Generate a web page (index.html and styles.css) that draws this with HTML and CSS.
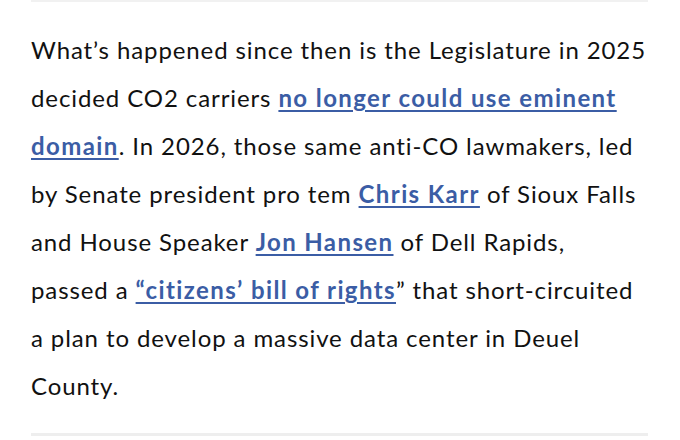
FILE: index.html
```html
<!DOCTYPE html>
<html>
<head>
<meta charset="utf-8">
<link rel="stylesheet" href="styles.css">
</head>
<body>
<div class="article">
  <hr class="rule">
  <p class="para">What’s happened since then is the Legislature in 2025<br>decided CO2 carriers <a href="#">no longer could use eminent<br>domain</a>. In 2026, those same anti-CO lawmakers, led<br>by Senate president pro tem <a href="#">Chris Karr</a> of Sioux Falls<br>and House Speaker <a href="#">Jon Hansen</a> of Dell Rapids,<br>passed a <a href="#">“citizens’ bill of rights</a>” that short-circuited<br>a plan to develop a massive data center in Deuel<br>County.</p>
  <hr class="rule rule-bottom">
</div>
</body>
</html>
```
FILE: styles.css
```css
html, body {
  margin: 0;
  padding: 0;
  background: #ffffff;
}
.article {
  width: 617px;
  margin-left: 31px;
  font-family: "Lato", "Open Sans", sans-serif;
  color: #111111;
}
.rule {
  border: 0;
  height: 2px;
  background: #f1f1f1;
  margin: 0;
}
.rule-bottom {
  height: 3px;
  background: #eeeeee;
}
.para {
  margin: 24px -24px 23px 0;
  font-size: 24px;
  line-height: 48px;
  letter-spacing: 0.9px;
}
.para a {
  color: #3b5da5;
  font-weight: 700;
  letter-spacing: 1.4px;
  text-decoration: underline;
  text-decoration-thickness: 2px;
  text-underline-offset: 3px;
}
```
